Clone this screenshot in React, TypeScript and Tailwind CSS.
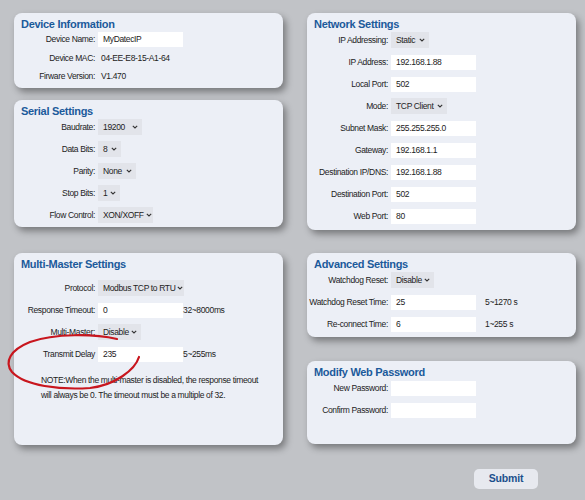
import type { ReactNode } from "react";

const font = { fontFamily: '"Liberation Sans", Arial, sans-serif' };

function Card({ title, className, children }: { title: string; className: string; children: ReactNode }) {
  return (
    <section className={`rounded-[8px] bg-[#eceff6] shadow-[3px_4px_7px_rgba(0,0,0,0.38)] ${className}`}>
      <h2 className="h-[16px] pl-[7px] pt-[4px] text-[11px] font-bold leading-[14px] tracking-[-0.3px] text-[#1b5a9b]">
        {title}
      </h2>
      <div className="text-[8.5px] tracking-[-0.35px] text-[#222]">{children}</div>
    </section>
  );
}

function Row({ label, h = "h-[22px]", children }: { label: string; h?: string; children: ReactNode }) {
  return (
    <div className={`flex items-center ${h}`}>
      <span className="w-[81px] shrink-0 whitespace-nowrap text-right">{label}</span>
      <div className="ml-[3px] flex items-center">{children}</div>
    </div>
  );
}

function Field({ value = "" }: { value?: string }) {
  return <div className="flex h-[15px] w-[85px] items-center bg-white pl-[5px]">{value}</div>;
}

function Pick({ value, w }: { value: string; w: string }) {
  return (
    <div className={`flex h-[16px] items-center justify-between gap-[2px] whitespace-nowrap bg-[#e2e4ea] pl-[5px] pr-[4px] ${w}`}>
      <span>{value}</span>
      <svg width="6" height="4" viewBox="0 0 6 4" className="shrink-0">
        <polyline points="0.8,0.8 3,3 5.2,0.8" fill="none" stroke="#333" strokeWidth="1.1" />
      </svg>
    </div>
  );
}

function Hint({ text, gap = "ml-0" }: { text: string; gap?: string }) {
  return <span className={`whitespace-nowrap ${gap}`}>{text}</span>;
}

export default function App() {
  return (
    <div className="relative h-[500px] w-[585px] overflow-hidden bg-[#c1c3c7]" style={font}>
      <div className="flex gap-[24px] pl-[14px] pt-[13px]">
        <div className="flex w-[269px] flex-col">
          <Card title="Device Information" className="h-[75px]">
            <Row label="Device Name:" h="h-[20px]">
              <Field value="MyDatecIP" />
            </Row>
            <Row label="Device MAC:" h="h-[18px]">
              <span className="pl-[3px]">04-EE-E8-15-A1-64</span>
            </Row>
            <Row label="Firware Version:" h="h-[18px]">
              <span className="pl-[3px]">V1.470</span>
            </Row>
          </Card>

          <Card title="Serial Settings" className="mt-[12px] h-[127px]">
            <Row label="Baudrate:">
              <Pick value="19200" w="w-[44px]" />
            </Row>
            <Row label="Data Bits:">
              <Pick value="8" w="w-[23px]" />
            </Row>
            <Row label="Parity:">
              <Pick value="None" w="w-[38px]" />
            </Row>
            <Row label="Stop Bits:">
              <Pick value="1" w="w-[22px]" />
            </Row>
            <Row label="Flow Control:">
              <Pick value="XON/XOFF" w="w-[55px]" />
            </Row>
          </Card>

          <Card title="Multi-Master Settings" className="mt-[26px] h-[192px]">
            <div className="mt-[8px]">
              <Row label="Protocol:">
                <Pick value="Modbus TCP to RTU" w="w-[86px]" />
              </Row>
              <Row label="Response Timeout:">
                <Field value="0" />
                <Hint text="32~8000ms" />
              </Row>
              <Row label="Multi-Master:">
                <Pick value="Disable" w="w-[43px]" />
              </Row>
              <Row label="Transmit Delay">
                <Field value="235" />
                <Hint text="5~255ms" />
              </Row>
            </div>
            <p className="mt-[8px] pl-[27px] leading-[15px]">
              <span className="block whitespace-nowrap">NOTE:When the multi-master is disabled, the response timeout</span>
              <span className="block whitespace-nowrap">will always be 0. The timeout must be a multiple of 32.</span>
            </p>
          </Card>
        </div>

        <div className="flex w-[269px] flex-col">
          <Card title="Network Settings" className="h-[217px]">
            <Row label="IP Addressing:">
              <Pick value="Static" w="w-[38px]" />
            </Row>
            <Row label="IP Address:">
              <Field value="192.168.1.88" />
            </Row>
            <Row label="Local Port:">
              <Field value="502" />
            </Row>
            <Row label="Mode:">
              <Pick value="TCP Client" w="w-[56px]" />
            </Row>
            <Row label="Subnet Mask:">
              <Field value="255.255.255.0" />
            </Row>
            <Row label="Gateway:">
              <Field value="192.168.1.1" />
            </Row>
            <Row label="Destination IP/DNS:">
              <Field value="192.168.1.88" />
            </Row>
            <Row label="Destination Port:">
              <Field value="502" />
            </Row>
            <Row label="Web Port:">
              <Field value="80" />
            </Row>
          </Card>

          <Card title="Advanced Settings" className="mt-[23px] h-[84px]">
            <Row label="Watchdog Reset:">
              <Pick value="Disable" w="w-[43px]" />
            </Row>
            <Row label="Watchdog Reset Time:">
              <Field value="25" />
              <Hint text="5~1270 s" gap="ml-[9px]" />
            </Row>
            <Row label="Re-connect Time:">
              <Field value="6" />
              <Hint text="1~255 s" gap="ml-[9px]" />
            </Row>
          </Card>

          <Card title="Modify Web Password" className="mt-[24px] h-[83px]">
            <Row label="New Password:">
              <Field />
            </Row>
            <Row label="Confirm Password:">
              <Field />
            </Row>
          </Card>

          <button className="ml-[167px] mt-[25px] h-[20px] w-[64px] rounded-[5px] bg-[#e7e9ef] text-[10.5px] font-bold tracking-[-0.2px] text-[#1b4f8c]">
            Submit
          </button>
        </div>
      </div>

      {/* hand-drawn annotation round the transmit delay row */}
      <svg className="pointer-events-none absolute inset-0" width="585" height="500" viewBox="0 0 585 500">
        <path
          d="M117,339 C95,334 55,333 30,342 C10,350 4,362 12,372 C25,386 60,390 90,388 C115,385 135,370 139,357"
          fill="none"
          stroke="#c8161e"
          strokeWidth="2.2"
          strokeLinecap="round"
        />
      </svg>
    </div>
  );
}
